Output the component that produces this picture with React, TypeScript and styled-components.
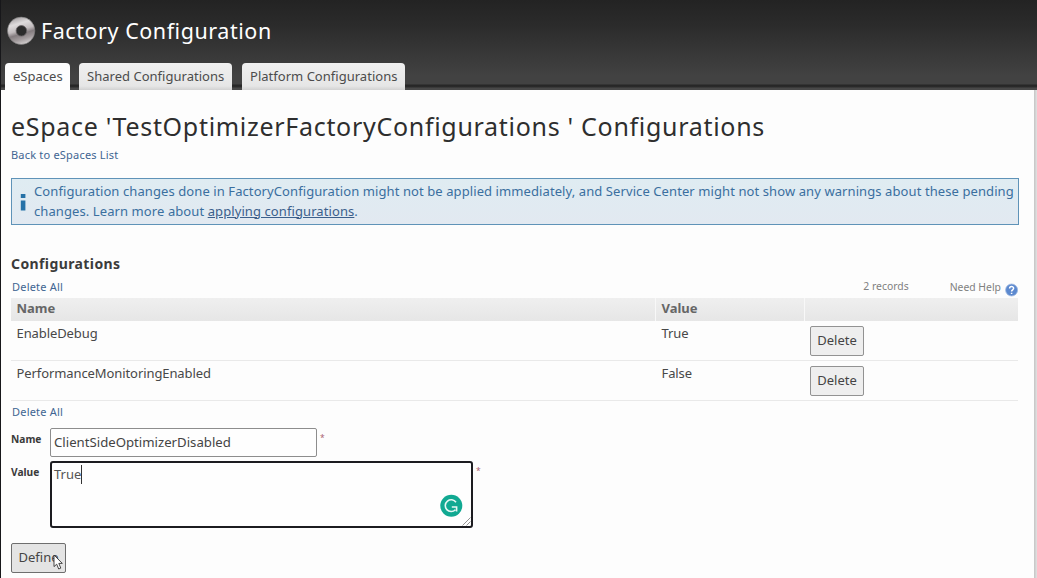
import React from "react";
import styled, { createGlobalStyle } from "styled-components";

const Global = createGlobalStyle`
  * { box-sizing: border-box; }
  html, body { margin: 0; height: 100%; overflow: hidden; }
  body { background: #fdfdfd; color: #3c3c3c; font-family: "Noto Sans", "Open Sans", sans-serif; }
`;

const Page = styled.div`
  width: 1037px;
  height: 578px;
  overflow: hidden;
  border-left: 1px solid #17171a;
  display: flex;
  flex-direction: column;
`;

const Header = styled.header`
  height: 90px;
  flex: none;
  background: linear-gradient(#232323 0, #2b2b2b 25px, #424242 76px, #424242 84px, #262626 85px, #2b2b2b 87px, #484848 88px, #484848 90px);
  display: flex;
  flex-direction: column;
  justify-content: space-between;
`;

const Brand = styled.div`
  display: flex;
  align-items: center;
  height: 61px;
  padding-left: 6px;
  gap: 5px;
`;

const BrandName = styled.div`
  color: #fff;
  font-size: 21.5px;
  letter-spacing: 0.55px;
  line-height: 30px;
  white-space: nowrap;
`;

const Tabs = styled.nav`
  display: flex;
  padding-left: 4px;
  height: 27px;
`;

const Tab = styled.div<{ $active?: boolean; $width: number; $gap: number }>`
  width: ${(p) => p.$width}px;
  margin-right: ${(p) => p.$gap}px;
  padding-left: 8px;
  line-height: 26px;
  font-size: 13px;
  letter-spacing: 0.02px;
  white-space: nowrap;
  color: #4c4c4c;
  border-radius: 4px 4px 0 0;
  background: ${(p) => (p.$active ? "#fdfdfd" : "linear-gradient(#f0f0f0, #e6e6e6 85%, #d2d2d2)")};
`;

const Body = styled.div`
  flex: 1;
  display: flex;
  min-height: 0;
`;

const Content = styled.main`
  width: 1033px;
  flex: none;
  padding: 19px 0 0 10px;
  background: #fdfdfd;
`;

const Gutter = styled.div`
  flex: 1;
  background: linear-gradient(90deg, #c4c4c4, #e2e2e2);
`;

const Title = styled.h1`
  margin: 0;
  font-weight: 400;
  font-size: 25px;
  line-height: 34px;
  letter-spacing: 0.7px;
  color: #2e2e2e;
  white-space: nowrap;
`;

const Link = styled.a`
  display: block;
  font-size: 11px;
  line-height: 16px;
  letter-spacing: 0.2px;
  color: #3f6592;
  white-space: nowrap;
`;

const BackLink = styled(Link)`
  margin-top: 4px;
`;

const Notice = styled.section`
  margin-top: 15px;
  width: 1008px;
  height: 47px;
  border: 1px solid #5f93b8;
  background: linear-gradient(#dfecf2, #e2e9f1);
  display: flex;
  align-items: center;
  color: #3a6f9f;
`;

const NoticeText = styled.div`
  font-size: 13px;
  line-height: 20px;
  letter-spacing: 0.09px;
  margin-top: -2px;
  white-space: nowrap;
`;

const Underlined = styled.span`
  text-decoration: underline;
  color: #3b5f8c;
`;

const SectionTitle = styled.h2`
  margin: 29px 0 0;
  font-size: 14px;
  line-height: 20px;
  letter-spacing: 0.4px;
  color: #3b3b3b;
`;

const ListBar = styled.div<{ $footer?: boolean }>`
  display: flex;
  width: 1008px;
  height: ${(p) => (p.$footer ? 27 : 24)}px;
  padding: ${(p) => (p.$footer ? 3 : 5)}px 0 0 1px;
`;

const Muted = styled.span`
  font-size: 10.4px;
  line-height: 16px;
  color: #808080;
  white-space: nowrap;
`;

const Records = styled(Muted)`
  margin-left: auto;
  margin-top: -1px;
`;

const Help = styled(Muted)`
  display: flex;
  gap: 4px;
  margin-left: 41px;
`;

const HelpIcon = styled.svg`
  margin-top: 2px;
`;

const Row = styled.div<{ $head?: boolean }>`
  display: grid;
  grid-template-columns: 644px 149px 1fr;
  width: 1007px;
  height: ${(p) => (p.$head ? 23 : 40)}px;
  color: ${(p) => (p.$head ? "#666" : "#484848")};
  font-weight: ${(p) => (p.$head ? 700 : 400)};
  background: ${(p) => (p.$head ? "linear-gradient(#efefef, #e6e6e6)" : "none")};
  border-bottom: ${(p) => (p.$head ? "0" : "1px solid #e9e9e9")};
`;

const Cell = styled.div<{ $head?: boolean }>`
  padding: ${(p) => (p.$head ? "0" : "2px")} 0 0 5.5px;
  font-size: 13px;
  line-height: 20px;
  letter-spacing: ${(p) => (p.$head ? 0 : -0.09)}px;
  border-left: ${(p) => (p.$head ? "1px solid #f8f8f8" : "1px solid transparent")};
  &:first-child { border-left: 0; }
`;

const Button = styled.button<{ $width: number; $dark?: boolean }>`
  display: block;
  width: ${(p) => p.$width}px;
  height: 30px;
  margin: 0;
  padding: 0 0 3px;
  border: 1px solid ${(p) => (p.$dark ? "#6e6e6e" : "#929292")};
  border-radius: 2px;
  background: ${(p) => (p.$dark ? "#e4e4e4" : "#eee")};
  color: #444;
  font: 400 13px/20px "Noto Sans", sans-serif;
`;

const ButtonCell = styled.div`
  padding: 5px 0 0 6px;
`;

const Field = styled.div`
  display: flex;
  align-items: flex-start;
  margin-bottom: 4px;
`;

const Label = styled.label`
  width: 39px;
  font-size: 10.2px;
  font-weight: 700;
  line-height: 22px;
  color: #3a3a3a;
`;

const TextBox = styled.div`
  width: 267px;
  height: 29px;
  border: 1px solid #8d8d8d;
  border-radius: 2px;
  background: #fefefe;
  padding-left: 3px;
  font-size: 13.2px;
  line-height: 27px;
  color: #444;
`;

const Area = styled.div`
  position: relative;
  width: 423px;
  height: 67px;
  border: 2px solid #1c1c20;
  border-radius: 3px;
  background: #fefefe;
  padding-left: 2px;
  display: flex;
  font-size: 13px;
  line-height: 22px;
  color: #555;
`;

const Caret = styled.i`
  width: 1px;
  height: 19px;
  margin-top: 2px;
  background: #333;
`;

const Star = styled.span`
  margin-left: 3px;
  font-size: 8.5px;
  line-height: 20px;
  color: #a8606f;
`;

const Badge = styled.svg`
  position: absolute;
  right: 8px;
  bottom: 8px;
`;

const Grip = styled.svg`
  position: absolute;
  right: 0;
  bottom: 0;
`;

const DefineWrap = styled.div`
  position: relative;
  width: 55px;
  margin-top: 15px;
`;

const Cursor = styled.svg`
  position: absolute;
  left: 42px;
  top: 11px;
`;

const Logo = () => (
  <svg width="29" height="30" viewBox="0 0 29 30">
    <defs>
      <linearGradient id="ring" x1="0.3" y1="0" x2="0.6" y2="1">
        <stop offset="0" stopColor="#a5a0a2" />
        <stop offset="0.25" stopColor="#dedbdc" />
        <stop offset="0.48" stopColor="#c2bcbe" />
        <stop offset="0.62" stopColor="#837b7e" />
        <stop offset="0.8" stopColor="#a29b9d" />
        <stop offset="1" stopColor="#d5d1d2" />
      </linearGradient>
    </defs>
    <circle cx="14.2" cy="14.8" r="13.7" fill="url(#ring)" stroke="#777" strokeWidth="0.6" />
    <circle cx="14.4" cy="14.8" r="5.3" fill="#2b2b2b" stroke="#696567" strokeWidth="0.8" />
  </svg>
);

const InfoMark = () => (
  <svg width="22" height="20" viewBox="0 0 22 20">
    <rect x="8.8" y="2" width="4.6" height="4" fill="#2672a7" />
    <rect x="8.8" y="8.5" width="4.6" height="10" fill="#2672a7" />
  </svg>
);

const rows = [
  { name: "EnableDebug", value: "True" },
  { name: "PerformanceMonitoringEnabled", value: "False" },
];

export default function App() {
  return (
    <>
      <Global />
      <Page>
        <Header>
          <Brand>
            <Logo />
            <BrandName>Factory Configuration</BrandName>
          </Brand>
          <Tabs>
            <Tab $active $width={65} $gap={9}>eSpaces</Tab>
            <Tab $width={153} $gap={10}>Shared Configurations</Tab>
            <Tab $width={163} $gap={0}>Platform Configurations</Tab>
          </Tabs>
        </Header>
        <Body>
          <Content>
            <Title>eSpace 'TestOptimizerFactoryConfigurations ' Configurations</Title>
            <BackLink>Back to eSpaces List</BackLink>
            <Notice>
              <InfoMark />
              <NoticeText>
                <div>
                  Configuration changes done in FactoryConfiguration might not be applied immediately, and Service Center might not show any warnings about these pending
                </div>
                <div>
                  changes. Learn more about <Underlined>applying configurations</Underlined>.
                </div>
              </NoticeText>
            </Notice>
            <SectionTitle>Configurations</SectionTitle>
            <ListBar>
              <Link>Delete All</Link>
              <Records>2 records</Records>
              <Help>
                Need Help
                <HelpIcon width="14" height="16" viewBox="0 0 14 16">
                  <circle cx="6.6" cy="9" r="6" fill="#5c89cf" stroke="#9db7df" strokeWidth="0.8" />
                  <path d="M4.6 7.4C4.6 4.9 8.6 5 8.6 7.3C8.6 8.8 6.6 8.8 6.6 10.4M6.6 11.7V13" fill="none" stroke="#fff" strokeWidth="1.5" />
                </HelpIcon>
              </Help>
            </ListBar>
            <Row $head>
              <Cell $head>Name</Cell>
              <Cell $head>Value</Cell>
              <Cell $head />
            </Row>
            {rows.map((r) => (
              <Row key={r.name}>
                <Cell>{r.name}</Cell>
                <Cell>{r.value}</Cell>
                <ButtonCell>
                  <Button $width={54}>Delete</Button>
                </ButtonCell>
              </Row>
            ))}
            <ListBar $footer>
              <Link>Delete All</Link>
            </ListBar>
            <Field>
              <Label>Name</Label>
              <TextBox>ClientSideOptimizerDisabled</TextBox>
              <Star>*</Star>
            </Field>
            <Field>
              <Label>Value</Label>
              <Area>
                True
                <Caret />
                <Badge width="24" height="24" viewBox="0 0 24 24">
                  <circle cx="12.3" cy="11.7" r="11" fill="#11a992" />
                  <path d="M17 8.2A5.9 5.9 0 1 0 16.4 15.8M12.8 13H17.6V17.4" fill="none" stroke="#e8f7f4" strokeWidth="1.6" />
                </Badge>
                <Grip width="9" height="9" viewBox="0 0 9 9">
                  <path d="M0.5 8.5L8.5 0.5M4.5 8.5L8.5 4.5" stroke="#777" strokeWidth="0.8" />
                </Grip>
              </Area>
              <Star>*</Star>
            </Field>
            <DefineWrap>
              <Button $width={55} $dark>Define</Button>
              <Cursor width="11" height="17" viewBox="0 0 11 17">
                <path d="M1 1V12.6L3.7 10.2L5.7 15L7.8 14.1L5.8 9.4H9.3Z" fill="#fff" stroke="#333" strokeWidth="0.9" />
              </Cursor>
            </DefineWrap>
          </Content>
          <Gutter />
        </Body>
      </Page>
    </>
  );
}
